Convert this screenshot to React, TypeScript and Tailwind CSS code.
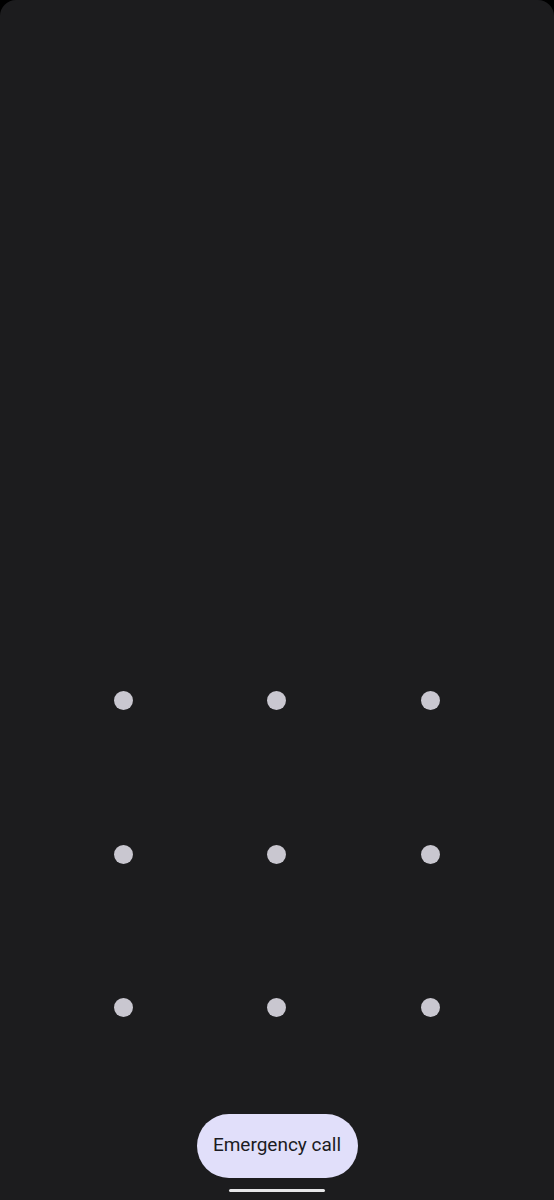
import React from "react";

const dots = Array.from({ length: 9 });

export default function App() {
  return (
    <div className="w-[554px] h-[1200px] bg-black">
      <div
        className="flex h-full flex-col items-center rounded-t-[16px] bg-[#1c1c1e]"
        style={{ fontFamily: "Roboto, 'Noto Sans', sans-serif" }}
      >
        <div className="grid w-[460px] grid-cols-3 pt-[624px]">
          {dots.map((_, i) => (
            <div key={i} className="flex h-[153.5px] items-center justify-center">
              <div className="h-[19px] w-[19px] rounded-full bg-[#c9c7d0]" />
            </div>
          ))}
        </div>
        <button
          type="button"
          className="mt-[29px] flex h-[64px] w-[161px] items-center justify-center rounded-full bg-[#e1dffa] text-[19px] text-[#1b1b22]"
        >
          Emergency call
        </button>
        <div className="mt-[11px] h-[3px] w-[96px] rounded-full bg-[#e6e6e8]" />
      </div>
    </div>
  );
}
